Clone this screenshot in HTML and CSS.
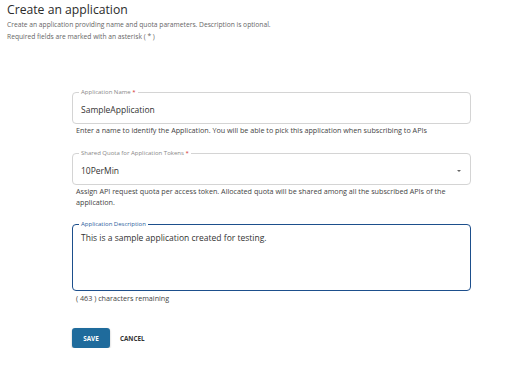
FILE: index.html
```html
<!DOCTYPE html>
<html>
<head>
<meta charset="utf-8">
<link rel="stylesheet" href="styles.css">
</head>
<body>
<div class="page">
  <h1 class="title">Create an application</h1>
  <p class="sub">Create an application providing name and quota parameters. Description is optional.</p>
  <p class="sub">Required fields are marked with an asterisk ( * )</p>

  <form class="form">
    <div class="field first">
      <fieldset class="box">
        <legend class="label">Application Name <span class="req">*</span></legend>
        <div class="value">SampleApplication</div>
      </fieldset>
      <p class="help">Enter a name to identify the Application. You will be able to pick this application when subscribing to APIs</p>
    </div>

    <div class="field second">
      <fieldset class="box">
        <legend class="label">Shared Quota for Application Tokens <span class="req">*</span></legend>
        <div class="value select">10PerMin<span class="caret"></span></div>
      </fieldset>
      <p class="help">Assign API request quota per access token. Allocated quota will be shared among all the subscribed APIs of the application.</p>
    </div>

    <div class="field last">
      <fieldset class="box focus">
        <legend class="label">Application Description</legend>
        <div class="value area">This is a sample application created for testing.</div>
      </fieldset>
      <p class="help">( 463 ) characters remaining</p>
    </div>

    <div class="actions">
      <button type="button" class="btn primary">SAVE</button>
      <button type="button" class="btn text">CANCEL</button>
    </div>
  </form>
</div>
</body>
</html>
```

FILE: styles.css
```css
* { box-sizing: border-box; }
html, body { margin: 0; padding: 0; background: #fff; }
body { font-family: "Open Sans", "Noto Sans", sans-serif; color: #333; }

.page { padding: 1px 0 0 7px; }

.title {
  margin: 0;
  font-size: 12.2px;
  font-weight: 400;
  line-height: 18px;
  color: #2b2b2b;
}
.sub {
  margin: 0;
  font-size: 6.7px;
  line-height: 12px;
  color: #666;
}

.form {
  margin: 46px 0 0 65px;
  width: 399px;
}

.field.first { margin-bottom: 14px; }
.field.second { margin-bottom: 13px; }
.field.last { margin-bottom: 24px; }

.box {
  margin: 0;
  padding: 0 8px;
  border: 1px solid #d4d4d4;
  border-radius: 4px;
  height: 35px;
  position: relative;
}
.label {
  margin-left: -2px;
  padding: 0 2px;
  font-size: 6px;
  line-height: 6px;
  color: #888;
}
.req { color: #d32f2f; }

.value {
  font-size: 8.5px;
  line-height: 12px;
  color: #333;
  padding-top: 9px;
}
.select { display: flex; justify-content: space-between; align-items: center; }
.caret {
  width: 0; height: 0;
  border-left: 2.5px solid transparent;
  border-right: 2.5px solid transparent;
  border-top: 2.5px solid #666;
  margin-right: 1px;
}

.box.focus {
  border: 1.5px solid #1d4f8c;
  height: 70px;
}
.box.focus .label { color: #2a5e9c; }
.value.area { padding-top: 5px; }

.help {
  margin: 1px 0 0 4px;
  font-size: 7.2px;
  line-height: 11px;
  color: #444;
}
.last .help { margin-top: 2px; }

.actions { display: flex; align-items: center; gap: 10px; }
.btn {
  font-family: "Open Sans", sans-serif;
  font-size: 6.3px;
  font-weight: 700;
  border: 0;
  cursor: pointer;
}
.primary {
  background: #1f6b9c;
  color: #fff;
  width: 38px;
  height: 20px;
  border-radius: 3px;
  box-shadow: 0 1px 2px rgba(0,0,0,0.3);
}
.text { background: none; color: #333; padding: 0; }
```
